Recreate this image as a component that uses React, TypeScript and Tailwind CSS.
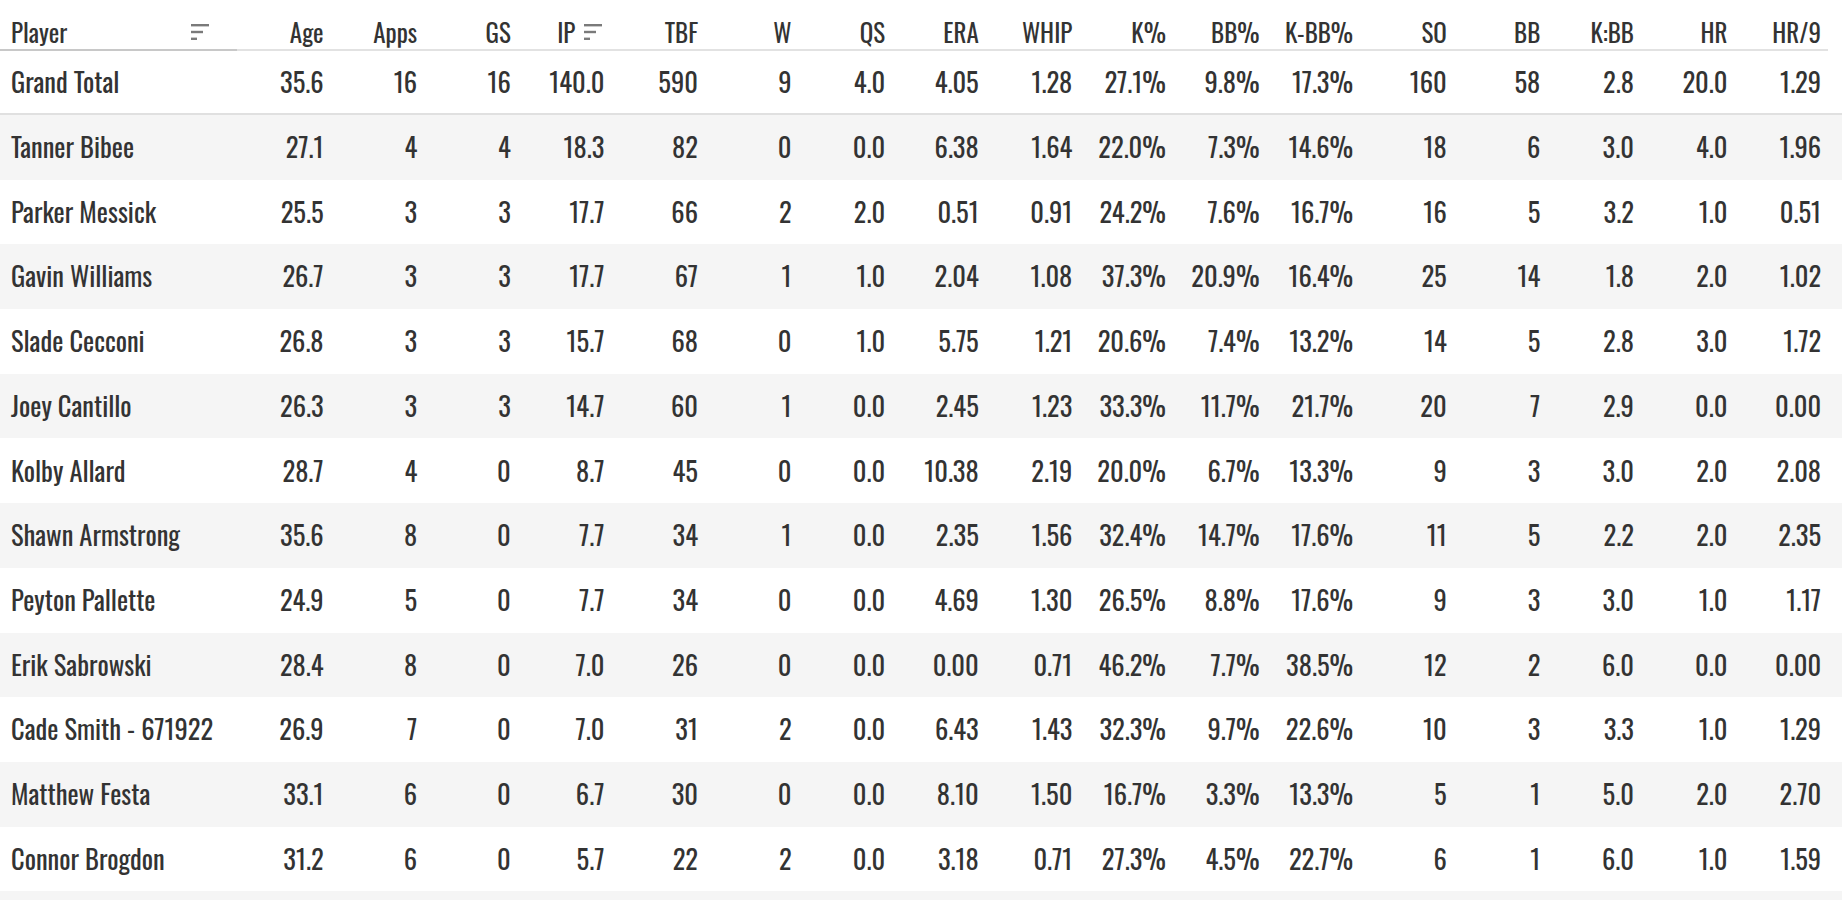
import React from "react";

type Row = string[];

const headers = ["Age", "Apps", "GS", "IP", "TBF", "W", "QS", "ERA", "WHIP", "K%", "BB%", "K-BB%", "SO", "BB", "K:BB", "HR", "HR/9"];

const total: Row = ["Grand Total", "35.6", "16", "16", "140.0", "590", "9", "4.0", "4.05", "1.28", "27.1%", "9.8%", "17.3%", "160", "58", "2.8", "20.0", "1.29"];

const rows: Row[] = [
  ["Tanner Bibee", "27.1", "4", "4", "18.3", "82", "0", "0.0", "6.38", "1.64", "22.0%", "7.3%", "14.6%", "18", "6", "3.0", "4.0", "1.96"],
  ["Parker Messick", "25.5", "3", "3", "17.7", "66", "2", "2.0", "0.51", "0.91", "24.2%", "7.6%", "16.7%", "16", "5", "3.2", "1.0", "0.51"],
  ["Gavin Williams", "26.7", "3", "3", "17.7", "67", "1", "1.0", "2.04", "1.08", "37.3%", "20.9%", "16.4%", "25", "14", "1.8", "2.0", "1.02"],
  ["Slade Cecconi", "26.8", "3", "3", "15.7", "68", "0", "1.0", "5.75", "1.21", "20.6%", "7.4%", "13.2%", "14", "5", "2.8", "3.0", "1.72"],
  ["Joey Cantillo", "26.3", "3", "3", "14.7", "60", "1", "0.0", "2.45", "1.23", "33.3%", "11.7%", "21.7%", "20", "7", "2.9", "0.0", "0.00"],
  ["Kolby Allard", "28.7", "4", "0", "8.7", "45", "0", "0.0", "10.38", "2.19", "20.0%", "6.7%", "13.3%", "9", "3", "3.0", "2.0", "2.08"],
  ["Shawn Armstrong", "35.6", "8", "0", "7.7", "34", "1", "0.0", "2.35", "1.56", "32.4%", "14.7%", "17.6%", "11", "5", "2.2", "2.0", "2.35"],
  ["Peyton Pallette", "24.9", "5", "0", "7.7", "34", "0", "0.0", "4.69", "1.30", "26.5%", "8.8%", "17.6%", "9", "3", "3.0", "1.0", "1.17"],
  ["Erik Sabrowski", "28.4", "8", "0", "7.0", "26", "0", "0.0", "0.00", "0.71", "46.2%", "7.7%", "38.5%", "12", "2", "6.0", "0.0", "0.00"],
  ["Cade Smith - 671922", "26.9", "7", "0", "7.0", "31", "2", "0.0", "6.43", "1.43", "32.3%", "9.7%", "22.6%", "10", "3", "3.3", "1.0", "1.29"],
  ["Matthew Festa", "33.1", "6", "0", "6.7", "30", "0", "0.0", "8.10", "1.50", "16.7%", "3.3%", "13.3%", "5", "1", "5.0", "2.0", "2.70"],
  ["Connor Brogdon", "31.2", "6", "0", "5.7", "22", "2", "0.0", "3.18", "0.71", "27.3%", "4.5%", "22.7%", "6", "1", "6.0", "1.0", "1.59"],
];

const SortIcon = () => (
  <svg viewBox="0 0 24 24" className="w-6 h-6 shrink-0" fill="#7a7a7a">
    <rect x="3" y="4" width="18" height="2.4" />
    <rect x="3" y="10.8" width="12" height="2.4" />
    <rect x="3" y="17.6" width="6" height="2.4" />
  </svg>
);

const grid = "grid grid-cols-[237px_repeat(17,93.6px)]";

export default function App() {
  return (
    <div
      className="w-[1842px] h-[900px] overflow-hidden bg-white text-[#333] text-[26.5px] leading-none"
      style={{ fontFamily: "Oswald, 'Roboto Condensed', sans-serif" }}
    >
      {/* header */}
      <div className={`${grid} h-[51px]`}>
        <div className="flex items-end justify-between pl-[11px] pr-[25px] pb-[5px] border-b-2 border-[#c8c8c8]">
          <span className="text-[25px]">Player</span>
          <span className="mb-[0px]"><SortIcon /></span>
        </div>
        {headers.map((h) => (
          <div key={h} className="flex items-end justify-end pr-[7px] pb-[5px] border-b-2 border-[#e2e2e2]">
            <span className="text-[25px]">{h}</span>
            {h === "IP" && <span className="ml-[6px] -mr-[1px] mb-[0px]"><SortIcon /></span>}
          </div>
        ))}
      </div>

      {/* grand total */}
      <div className={`${grid} h-[64px] border-b-2 border-[#e0e0e0]`}>
        {total.map((c, i) => (
          <div key={i} className={i === 0 ? "flex items-center pl-[11px] pb-[2px]" : "flex items-center justify-end pr-[7px] pb-[2px]"}>
            {c}
          </div>
        ))}
      </div>

      {rows.map((r, ri) => (
        <div key={ri} className={`${grid} h-[64.7px] ${ri % 2 === 0 ? "bg-[#f5f5f5]" : "bg-white"}`}>
          {r.map((c, i) => (
            <div key={i} className={i === 0 ? "flex items-center pl-[11px] pb-[2px] whitespace-nowrap" : "flex items-center justify-end pr-[7px] pb-[2px]"}>
              {c}
            </div>
          ))}
        </div>
      ))}
      <div className="h-[64.7px] bg-[#f5f5f5]" />
    </div>
  );
}
